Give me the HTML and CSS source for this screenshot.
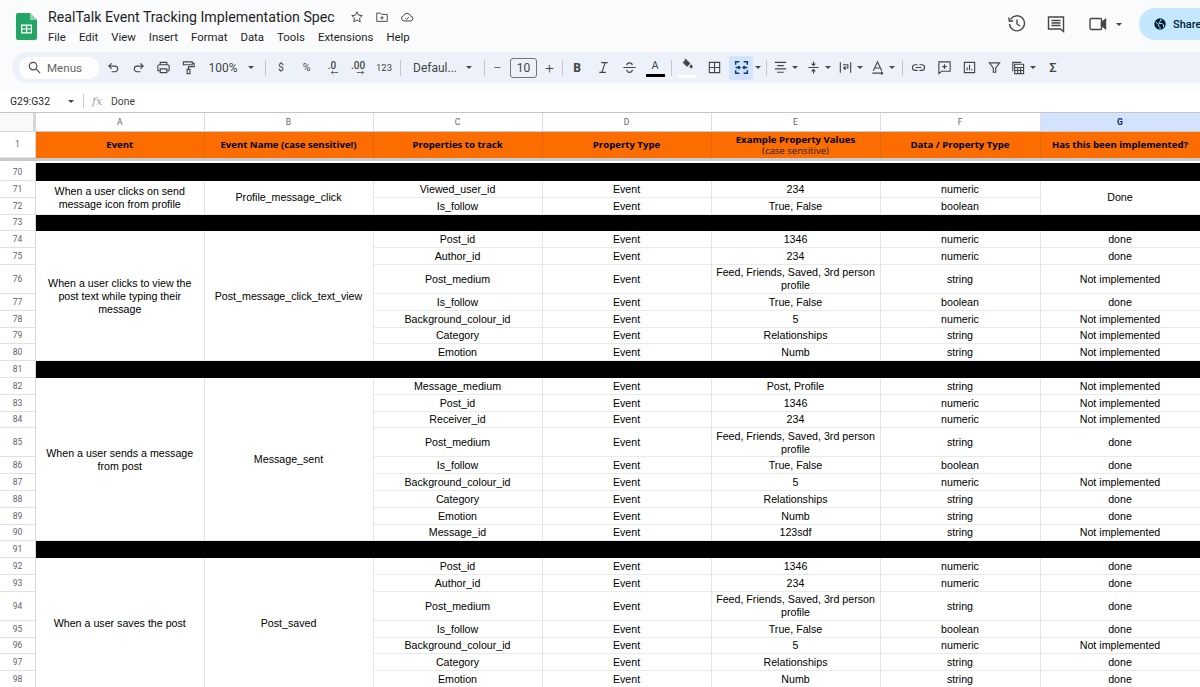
FILE: index.html
```html
<!DOCTYPE html>
<html lang="en">
<head>
<meta charset="utf-8">
<title>RealTalk Event Tracking Implementation Spec</title>
<link rel="stylesheet" href="styles.css">
</head>
<body>
<div class="app">
  <header class="top">
    <svg class="logo" viewBox="0 0 21 27"><path class="logo-g" d="M2 0h12l7 7v18a2 2 0 0 1-2 2H2a2 2 0 0 1-2-2V2a2 2 0 0 1 2-2z"/><path class="logo-f" d="M14 0l7 7h-7z"/><path class="logo-w" d="M5 11.5h11v9H5zM6.300 12.800v2.600h3.600v-2.600zM11.200 12.800v2.600h3.600v-2.600zM6.300 16.600v2.600h3.600v-2.600zM11.200 16.600v2.600h3.600v-2.600z"/></svg>
    <div class="titles">
      <div class="title-row">
        <span class="doc-title">RealTalk Event Tracking Implementation Spec</span>
        <svg class="ic title-ic first" viewBox="0 0 16 16"><path d="M8 2l1.800 3.900 4.200.5-3.100 2.900.8 4.200L8 11.400l-3.700 2.100.8-4.200L2 6.400l4.200-.5z"/></svg>
        <svg class="ic title-ic" viewBox="0 0 16 16"><path d="M2 3.500h4l1.500 1.500H14v8H2zM8 7v4M6 9h4"/></svg>
        <svg class="ic title-ic" viewBox="0 0 16 16"><path d="M4.500 12.500a3 3 0 0 1-.5-5.900 4.300 4.300 0 0 1 8.200.5 2.700 2.700 0 0 1-.4 5.400zM6 9.500l1.500 1.300L10.200 8"/></svg>
      </div>
      <nav class="menus"><span>File</span><span>Edit</span><span>View</span><span>Insert</span><span>Format</span><span>Data</span><span>Tools</span><span>Extensions</span><span>Help</span></nav>
    </div>
    <div class="top-right">
      <svg class="ic big" viewBox="0 0 20 20"><path d="M3.500 5.500A7.500 7.500 0 1 1 2.500 10M1.800 3.500l.6 3.800 3.800-.6M10 5.500V10l3 2"/></svg>
      <svg class="ic big cmt" viewBox="0 0 20 20"><path d="M2.500 3h15v14.500L14.500 15h-12zM5.500 6.500h9M5.500 9h9M5.500 11.500h9"/></svg>
      <svg class="ic big vid" viewBox="0 0 20 20"><path d="M3.500 4.500h9a1 1 0 0 1 1 1v9a1 1 0 0 1-1 1h-9a1.500 1.500 0 0 1-1.500-1.500V6a1.500 1.500 0 0 1 1.500-1.500z"/><path class="solid" d="M13.500 8.500l4-3v9l-4-3z"/></svg>
      <span class="caret vid-caret"></span>
      <div class="share">
        <svg class="globe" viewBox="0 0 16 16"><circle cx="8" cy="8" r="6.500"/><path class="globe-l" d="M3 5.500l3.500 3.500v1.500l1.500 1.500v2M9 2.200v2.300L7 6v1.500h3.500l1.500 1.500v2.500"/></svg>
        <span>Share</span>
      </div>
    </div>
  </header>

  <div class="toolbar">
    <div class="search"><svg class="ic" viewBox="0 0 16 16"><circle cx="6.500" cy="6.500" r="4"/><path d="M9.500 9.500l4.500 4.500"/></svg><span>Menus</span></div>
    <div class="t t25 ml2"><svg class="ic" viewBox="0 0 16 16"><path d="M6 3.500L3 6.500l3 3M3 6.500h6.500a3 3 0 0 1 0 6H6"/></svg></div>
    <div class="t t25"><svg class="ic" viewBox="0 0 16 16"><path d="M10 3.500l3 3-3 3M13 6.500H6.500a3 3 0 0 0 0 6H10"/></svg></div>
    <div class="t t25"><svg class="ic" viewBox="0 0 16 16"><path d="M4.500 5V2.500h7V5M4.500 11.500H2V6.500A1.500 1.500 0 0 1 3.500 5h9A1.500 1.500 0 0 1 14 6.500v5h-2.500M4.500 9.500h7v4h-7z"/></svg></div>
    <div class="t t25"><svg class="ic" viewBox="0 0 16 16"><path d="M2.500 2h9.500v3H2.500zM12 3.500h2V7H8v3M6.500 10h3v4.500h-3z"/></svg></div>
    <div class="t zoom-t">100%</div>
    <div class="cw12"><span class="caret"></span></div>
    <div class="sep ml8"></div>
    <div class="t t26 ml2 txt">$</div>
    <div class="t t25 txt">%</div>
    <div class="t t26 stack"><span>.0</span><svg class="arr" viewBox="0 0 10 5"><path d="M9 2.500H1.500M3.500.5l-2 2 2 2"/></svg></div>
    <div class="t t26 stack"><span>.00</span><svg class="arr" viewBox="0 0 10 5"><path d="M1 2.500h7.500M6.500.5l2 2-2 2"/></svg></div>
    <div class="t t26 txt small">123</div>
    <div class="sep ml3"></div>
    <div class="font-name">Defaul...</div>
    <div class="cw12"><span class="caret"></span></div>
    <div class="sep ml9"></div>
    <div class="t t25 op">−</div>
    <div class="size-box">10</div>
    <div class="t t25 op">+</div>
    <div class="sep"></div>
    <div class="t t26 ml1 bold">B</div>
    <div class="t t26"><svg class="ic" viewBox="0 0 16 16"><path d="M5.500 2.800h7M3.500 13.200h7M9.800 2.800L6.200 13.200"/></svg></div>
    <div class="t t26"><svg class="ic" viewBox="0 0 16 16"><path d="M1.500 8h13M11 5.500C10.800 3.800 9.500 3 8 3S5.200 3.800 5 5.500M11 10.500c0 1.700-1.500 2.700-3 2.700s-3-1-3-2.700"/></svg></div>
    <div class="t t26 color-a"><span>A</span><i></i></div>
    <div class="sep ml3"></div>
    <div class="t t26 ml2 fill"><svg class="ic bucket" viewBox="0 0 16 16"><path class="solid" d="M5.500 1l1.200 1.200 5.300 5-4 4-5-5L6 2.500z"/><path class="solid" d="M13.500 9c1 1.300 1.500 2 1.500 2.700a1.500 1.500 0 0 1-3 0c0-.7.500-1.400 1.500-2.700z"/></svg><i></i></div>
    <div class="t t26 ml1"><svg class="ic" viewBox="0 0 16 16"><path d="M2.500 2.500h11v11h-11zM8 2.500v11M2.500 8h11"/></svg></div>
    <div class="merge ml2"><svg class="ic navy" viewBox="0 0 16 16"><path d="M6 2.500H2.500v3M2.500 10.500v3H6M10 2.500h3.500v3M13.500 10.500v3H10M2.500 8h4M5 6.500L6.500 8 5 9.500M13.500 8h-4M11 6.500L9.500 8l1.500 1.500"/></svg></div>
    <div class="cw10"><span class="caret"></span></div>
    <div class="sep ml3"></div>
    <div class="t t20 ml3"><svg class="ic" viewBox="0 0 16 16"><path d="M2 2.500h12M4.500 6h7M2 9.500h12M4.500 13h7"/></svg></div>
    <div class="cw10"><span class="caret"></span></div>
    <div class="t t20 ml3"><svg class="ic" viewBox="0 0 16 16"><path d="M2.500 8h11M8 1.500v4M6 3.800L8 5.800l2-2M8 14.500v-4M6 12.200l2-2 2 2"/></svg></div>
    <div class="cw10"><span class="caret"></span></div>
    <div class="t t20 ml2"><svg class="ic" viewBox="0 0 16 16"><path d="M2.500 2.500v11M13.500 2.500v11M5.500 5h5v3.500H6M8 6.500L6 8.500l2 2"/></svg></div>
    <div class="cw10"><span class="caret"></span></div>
    <div class="t t20 ml2"><svg class="ic" viewBox="0 0 16 16"><path d="M3.500 11.500L8 2l4.500 9.500M5 8.500h6M2.500 14h11M12 12.500l1.500 1.500-1.500 1.500"/></svg></div>
    <div class="cw10"><span class="caret"></span></div>
    <div class="sep ml5"></div>
    <div class="t t26 ml2"><svg class="ic" viewBox="0 0 16 16"><path d="M7 5H4.500a3 3 0 0 0 0 6H7M9 5h2.500a3 3 0 0 1 0 6H9M5 8h6"/></svg></div>
    <div class="t t26"><svg class="ic" viewBox="0 0 16 16"><path d="M2 2h12v10H5l-3 2.500zM8 4.500v5M5.500 7h5"/></svg></div>
    <div class="t t25"><svg class="ic" viewBox="0 0 16 16"><path d="M2.500 2.500h11v11h-11zM5.500 11V8M8 11V5M10.500 11v-1.500"/></svg></div>
    <div class="t t25"><svg class="ic" viewBox="0 0 16 16"><path d="M2.500 3h11L9.300 8.500V13H6.700V8.500z"/></svg></div>
    <div class="t t21"><svg class="ic" viewBox="0 0 16 16"><path d="M3 12V2.500h9M5 4.500h9.500v10H5zM5 8h9.500M5 11.200h9.500M8.200 8v6.500M11.300 8v6.500"/></svg></div>
    <div class="cw10"><span class="caret"></span></div>
    <div class="t t26 ml2 sigma">Σ</div>
  </div>

  <div class="formula">
    <span class="range">G29:G32</span>
    <span class="caret range-caret"></span>
    <span class="fsep"></span>
    <span class="fx">fx</span>
    <span class="fval">Done</span>
  </div>

  <main class="sheet">
    <div class="corner"></div>
    <div class="col">A</div><div class="col">B</div><div class="col">C</div><div class="col">D</div><div class="col">E</div><div class="col">F</div><div class="col sel">G</div>

    <div class="num">1</div>
    <div class="hd">Event</div><div class="hd">Event Name (case sensitive!)</div><div class="hd">Properties to track</div><div class="hd">Property Type</div>
    <div class="hd two"><span>Example Property Values</span><small>(case sensitive)</small></div>
    <div class="hd">Data / Property Type</div><div class="hd">Has this been implemented?</div>

    <div class="freeze"></div>

    <div class="num">70</div><div class="black"></div>

    <div class="num">71</div>
    <div class="c r2">When a user clicks on send message icon from profile</div>
    <div class="c r2">Profile_message_click</div>
    <div class="c">Viewed_user_id</div><div class="c">Event</div><div class="c">234</div><div class="c">numeric</div><div class="c r2">Done</div>
    <div class="num">72</div>
    <div class="c">Is_follow</div><div class="c">Event</div><div class="c">True, False</div><div class="c">boolean</div>

    <div class="num">73</div><div class="black"></div>

    <div class="num">74</div>
    <div class="c r7">When a user clicks to view the post text while typing their message</div>
    <div class="c r7">Post_message_click_text_view</div>
    <div class="c">Post_id</div><div class="c">Event</div><div class="c">1346</div><div class="c">numeric</div><div class="c">done</div>
    <div class="num">75</div>
    <div class="c">Author_id</div><div class="c">Event</div><div class="c">234</div><div class="c">numeric</div><div class="c">done</div>
    <div class="num">76</div>
    <div class="c">Post_medium</div><div class="c">Event</div><div class="c">Feed, Friends, Saved, 3rd person profile</div><div class="c">string</div><div class="c">Not implemented</div>
    <div class="num">77</div>
    <div class="c">Is_follow</div><div class="c">Event</div><div class="c">True, False</div><div class="c">boolean</div><div class="c">done</div>
    <div class="num">78</div>
    <div class="c">Background_colour_id</div><div class="c">Event</div><div class="c">5</div><div class="c">numeric</div><div class="c">Not implemented</div>
    <div class="num">79</div>
    <div class="c">Category</div><div class="c">Event</div><div class="c">Relationships</div><div class="c">string</div><div class="c">Not implemented</div>
    <div class="num">80</div>
    <div class="c">Emotion</div><div class="c">Event</div><div class="c">Numb</div><div class="c">string</div><div class="c">Not implemented</div>

    <div class="num">81</div><div class="black"></div>

    <div class="num">82</div>
    <div class="c r9">When a user sends a message from post</div>
    <div class="c r9">Message_sent</div>
    <div class="c">Message_medium</div><div class="c">Event</div><div class="c">Post, Profile</div><div class="c">string</div><div class="c">Not implemented</div>
    <div class="num">83</div>
    <div class="c">Post_id</div><div class="c">Event</div><div class="c">1346</div><div class="c">numeric</div><div class="c">Not implemented</div>
    <div class="num">84</div>
    <div class="c">Receiver_id</div><div class="c">Event</div><div class="c">234</div><div class="c">numeric</div><div class="c">Not implemented</div>
    <div class="num">85</div>
    <div class="c">Post_medium</div><div class="c">Event</div><div class="c">Feed, Friends, Saved, 3rd person profile</div><div class="c">string</div><div class="c">done</div>
    <div class="num">86</div>
    <div class="c">Is_follow</div><div class="c">Event</div><div class="c">True, False</div><div class="c">boolean</div><div class="c">done</div>
    <div class="num">87</div>
    <div class="c">Background_colour_id</div><div class="c">Event</div><div class="c">5</div><div class="c">numeric</div><div class="c">Not implemented</div>
    <div class="num">88</div>
    <div class="c">Category</div><div class="c">Event</div><div class="c">Relationships</div><div class="c">string</div><div class="c">done</div>
    <div class="num">89</div>
    <div class="c">Emotion</div><div class="c">Event</div><div class="c">Numb</div><div class="c">string</div><div class="c">done</div>
    <div class="num">90</div>
    <div class="c">Message_id</div><div class="c">Event</div><div class="c">123sdf</div><div class="c">string</div><div class="c">Not implemented</div>

    <div class="num">91</div><div class="black"></div>

    <div class="num">92</div>
    <div class="c r7">When a user saves the post</div>
    <div class="c r7">Post_saved</div>
    <div class="c">Post_id</div><div class="c">Event</div><div class="c">1346</div><div class="c">numeric</div><div class="c">done</div>
    <div class="num">93</div>
    <div class="c">Author_id</div><div class="c">Event</div><div class="c">234</div><div class="c">numeric</div><div class="c">done</div>
    <div class="num">94</div>
    <div class="c">Post_medium</div><div class="c">Event</div><div class="c">Feed, Friends, Saved, 3rd person profile</div><div class="c">string</div><div class="c">done</div>
    <div class="num">95</div>
    <div class="c">Is_follow</div><div class="c">Event</div><div class="c">True, False</div><div class="c">boolean</div><div class="c">done</div>
    <div class="num">96</div>
    <div class="c">Background_colour_id</div><div class="c">Event</div><div class="c">5</div><div class="c">numeric</div><div class="c">Not implemented</div>
    <div class="num">97</div>
    <div class="c">Category</div><div class="c">Event</div><div class="c">Relationships</div><div class="c">string</div><div class="c">done</div>
    <div class="num">98</div>
    <div class="c">Emotion</div><div class="c">Event</div><div class="c">Numb</div><div class="c">string</div><div class="c">done</div>
  </main>
</div>
</body>
</html>
```

FILE: styles.css
```css
* { box-sizing: border-box; }
html, body { margin: 0; height: 100%; overflow: hidden; }
body { background: #f9fbfd; font-family: Roboto, "Liberation Sans", sans-serif; color: #1f1f1f; }
.app { width: 1200px; height: 687px; overflow: hidden; display: flex; flex-direction: column; }

.ic { width: 15px; height: 15px; fill: none; stroke: #444746; stroke-width: 1.2; flex: none; display: block; }
.ic .solid { fill: #444746; }
.ic.navy { stroke: #0b3a78; stroke-width: 1.4; width: 17px; height: 17px; }
.caret { display: block; width: 0; height: 0; border-left: 3.5px solid transparent; border-right: 3.5px solid transparent; border-top: 3.5px solid #444746; flex: none; }

/* header */
.top { height: 52px; flex: none; display: flex; padding-left: 16px; position: relative; }
.logo { width: 21px; height: 27px; margin-top: 13px; flex: none; }
.logo-g { fill: #23a566; }
.logo-f { fill: #8ed1b1; }
.logo-w { fill: #fff; fill-rule: evenodd; }
.titles { margin-left: 11px; display: flex; flex-direction: column; }
.title-row { height: 22px; margin-top: 6px; display: flex; align-items: center; }
.doc-title { font-size: 14.2px; color: #1f1f1f; white-space: nowrap; width: 288px; }
.title-ic { width: 14px; height: 14px; margin-left: 11px; stroke-width: 1.1; }
.title-ic.first { margin-left: 14px; }
.menus { display: flex; gap: 13px; font-size: 11.4px; color: #1f1f1f; height: 18px; align-items: center; }
.top-right { margin-left: auto; display: flex; align-items: center; height: 48px; flex: none; width: 200px; padding-left: 7px; }
.ic.big { width: 20px; height: 20px; stroke-width: 1.4; }
.ic.big .solid { fill: #444746; }
.cmt { margin-left: 19px; }
.vid { margin-left: 22px; }
.vid-caret { margin-left: 8px; }
.share { margin-left: 17px; width: 100px; height: 32px; flex: none; border-radius: 16px; background: #c2e7ff; display: flex; align-items: center; padding-left: 14px; font-size: 11px; font-weight: 500; color: #001d35; }
.share span { margin-left: 6px; }
.globe { width: 14px; height: 14px; fill: #001d35; flex: none; }
.globe-l { fill: none; stroke: #c2e7ff; stroke-width: 1.1; }

/* toolbar */
.toolbar { height: 31px; flex: none; margin-left: 12px; margin-bottom: 7px; padding-left: 7px; background: #edf2fa; border-radius: 16px 0 0 16px; display: flex; align-items: center; font-size: 11px; color: #444746; white-space: nowrap; }
.search { width: 80px; height: 22px; border-radius: 11px; background: #fff; display: flex; align-items: center; padding-left: 8px; gap: 5px; font-size: 11.6px; color: #5f6368; flex: none; }
.t { height: 24px; display: flex; align-items: center; justify-content: center; flex: none; }
.t25 { width: 25px; } .t26 { width: 26px; } .t20 { width: 20px; } .t21 { width: 21px; }
.ml1 { margin-left: 1px; } .ml2 { margin-left: 2px; } .ml3 { margin-left: 3px; } .ml5 { margin-left: 5px; } .ml8 { margin-left: 8px; } .ml9 { margin-left: 9px; }
.zoom-t { width: 44px; font-size: 12px; }
.cw12, .cw10 { height: 24px; display: flex; align-items: center; justify-content: center; flex: none; }
.cw12 { width: 12px; } .cw10 { width: 10px; }
.sep { width: 1px; height: 16px; background: #c7c7c7; flex: none; }
.txt { font-size: 10.5px; }
.small { font-size: 9.5px; }
.stack { flex-direction: column; font-size: 10px; line-height: 9px; font-weight: 500; }
.arr { width: 9px; height: 5px; fill: none; stroke: #444746; stroke-width: .9; margin-left: 4px; display: block; }
.font-name { margin-left: 12px; width: 50px; font-size: 12px; flex: none; }
.op { font-size: 15px; font-weight: 300; }
.size-box { width: 27px; height: 20px; flex: none; border: 1px solid #747775; border-radius: 3px; display: flex; align-items: center; justify-content: center; font-size: 12px; }
.bold { font-weight: 700; font-size: 12px; font-family: "Open Sans", sans-serif; }
.color-a { position: relative; font-size: 11px; padding-bottom: 5px; }
.color-a i { position: absolute; left: 4px; right: 3px; bottom: 2.500px; height: 3px; background: #000; }
.fill { position: relative; }
.ic.bucket { width: 12px; height: 12px; margin-bottom: 7px; }
.fill i { position: absolute; left: 4px; right: 4px; bottom: 2px; height: 3px; background: #fff; }
.merge { width: 24px; height: 24px; flex: none; background: #d3e3fd; border-radius: 3px; display: flex; align-items: center; justify-content: center; }
.sigma { font-size: 13px; font-weight: 500; }

/* formula bar */
.formula { height: 23px; flex: none; background: #fff; border-bottom: 1px solid #c4c7c5; display: flex; align-items: center; font-size: 10.4px; color: #1f1f1f; padding-left: 10px; }
.range { width: 58px; flex: none; }
.range-caret { margin-right: 9px; }
.fsep { width: 1px; height: 14px; background: #c7c7c7; flex: none; }
.fx { font-family: "DejaVu Serif", serif; font-style: italic; font-size: 11px; color: #9aa0a6; margin-left: 8px; width: 19px; flex: none; }
.fval { color: #444; }

/* sheet */
.sheet {
  flex: none; height: 575px; background: #fff; display: grid;
  grid-template-columns: 36px 168.5px 169px 169px 169px 169px 160px 160px;
  grid-template-rows: 19px 25.5px 5.5px 18px repeat(5, 16.8px) 29px repeat(8, 16.8px) 29px repeat(8, 16.8px) 29px repeat(4, 16.8px);
  font-family: "Liberation Sans", Arial, sans-serif; font-size: 10.67px; color: #000;
}
.corner { background: #f8f9fa; border-right: 3px solid #d5d7d9; border-bottom: 1px solid #d5d7d9; }
.col { display: flex; align-items: center; justify-content: center; border-right: 1px solid #dcdee0; border-bottom: 1px solid #c8cacc; font-family: Roboto, sans-serif; font-size: 8.5px; color: #5f6368; background: #fff; }
.col.sel { background: #d3e3fd; color: #0b2a5c; font-weight: 700; }
.num { display: flex; align-items: center; justify-content: center; border-right: 1px solid #d5d7d9; border-bottom: 1.5px solid #dfe1e3; font-family: Roboto, sans-serif; font-size: 8.5px; color: #5f6368; background: #fff; }
.hd { background: #fb6d00; border-right: 1px solid #e2660a; display: flex; flex-direction: column; align-items: center; justify-content: center; text-align: center; font-family: "Open Sans", sans-serif; font-weight: 700; font-size: 9.6px; color: #000; line-height: 11px; }
.hd small { font-size: 9.6px; font-weight: 400; color: #222; }
.freeze { grid-column: 1 / -1; background: #fff; border-top: 3.5px solid #c7c9cb; }
.black { grid-column: span 7; background: #000; }
.c { display: flex; align-items: center; justify-content: center; text-align: center; padding: 1px 4px 0; line-height: 13px; border-right: 1px solid #e3e4e5; border-bottom: 1px solid #e9eaeb; white-space: normal; }
.r2 { grid-row: span 2; }
.r7 { grid-row: span 7; }
.r9 { grid-row: span 9; }
```
